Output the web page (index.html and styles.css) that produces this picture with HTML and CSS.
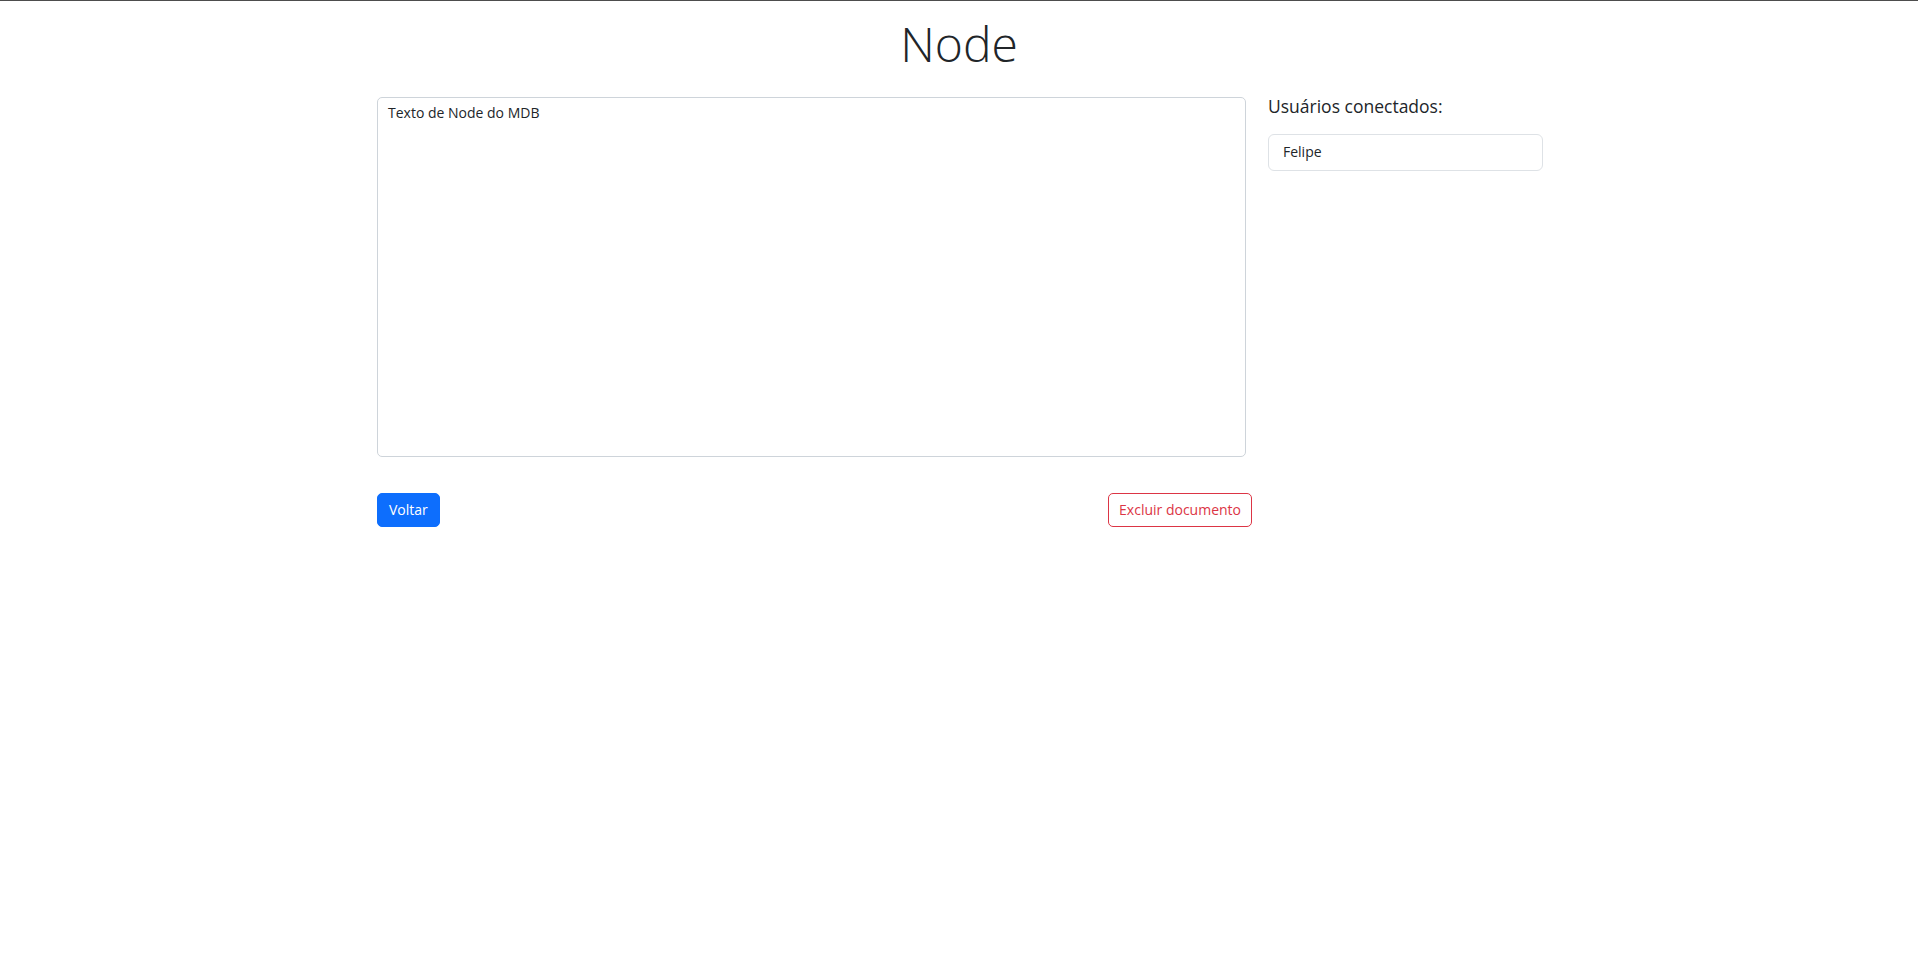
FILE: index.html
```html
<!DOCTYPE html>
<html lang="pt-BR">
<head>
<meta charset="utf-8">
<title>Node</title>
<link rel="stylesheet" href="styles.css">
</head>
<body>
<h1 class="title">Node</h1>
<main class="layout">
  <section class="editor">
    <textarea class="editor-text">Texto de Node do MDB</textarea>
    <div class="actions">
      <button class="btn btn-primary" type="button">Voltar</button>
      <button class="btn btn-outline-danger" type="button">Excluir documento</button>
    </div>
  </section>
  <aside class="sidebar">
    <h2 class="sidebar-title">Usuários conectados:</h2>
    <ul class="user-list">
      <li class="user-item">Felipe</li>
    </ul>
  </aside>
</main>
</body>
</html>
```

FILE: styles.css
```css
* { box-sizing: border-box; }

html, body {
  margin: 0;
  padding: 0;
  background: #fff;
}

body {
  border-top: 1px solid #4d4d4d;
  font-family: "Open Sans", "Noto Sans", sans-serif;
  color: #212529;
}

.title {
  margin: 14px 0 24px;
  text-align: center;
  font-size: 48px;
  font-weight: 300;
  line-height: 57.6px;
}

.layout {
  width: 1168px;
  margin: 0 auto;
  padding-left: 2px;
  display: flex;
  gap: 16px;
  align-items: flex-start;
}

.editor {
  width: 875px;
  display: flex;
  flex-direction: column;
}

.editor-text {
  display: block;
  width: 869px;
  height: 360px;
  margin: 0;
  padding: 4px 10px;
  border: 1px solid #ced4da;
  border-radius: 5px;
  font-family: inherit;
  font-size: 14px;
  line-height: 21px;
  color: #212529;
  resize: none;
  outline: none;
}

.actions {
  margin-top: 36px;
  display: flex;
  justify-content: space-between;
}

.btn {
  font-family: inherit;
  font-size: 14px;
  line-height: 20px;
  padding: 6px 10px;
  border-radius: 5px;
  border: 1px solid transparent;
  background: transparent;
  cursor: pointer;
}

.btn-primary {
  background: #0d6efd;
  border-color: #0d6efd;
  color: #fff;
  padding: 6px 11px;
}

.btn-outline-danger {
  border-color: #dc3545;
  color: #dc3545;
}

.sidebar {
  width: 275px;
}

.sidebar-title {
  margin: -3px 0 16px;
  font-size: 17.5px;
  font-weight: 400;
  line-height: 24px;
}

.user-list {
  list-style: none;
  margin: 0;
  padding: 0;
}

.user-item {
  border: 1px solid #dee2e6;
  border-radius: 6px;
  padding: 7px 14px 8px;
  font-size: 14px;
  line-height: 20px;
}
```
